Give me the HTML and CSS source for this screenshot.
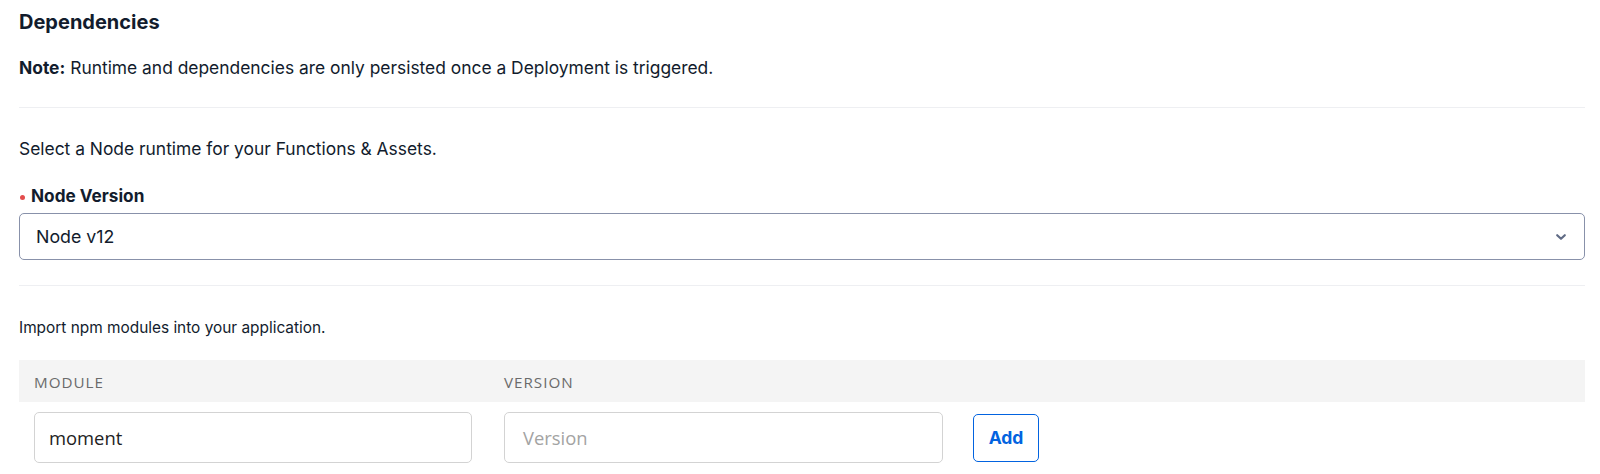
FILE: index.html
```html
<!DOCTYPE html>
<html lang="en">
<head>
<meta charset="utf-8">
<title>Dependencies</title>
<link rel="stylesheet" href="styles.css">
</head>
<body>
<div class="page">
  <h1 class="title">Dependencies</h1>
  <p class="note"><strong>Note:</strong> Runtime and dependencies are only persisted once a Deployment is triggered.</p>
  <hr class="divider">
  <p class="help help-runtime">Select a Node runtime for your Functions &amp; Assets.</p>
  <label class="label"><span class="required"></span>Node Version</label>
  <div class="select">
    <span class="select-value">Node v12</span>
    <svg class="chevron" width="14" height="14" viewBox="0 0 14 14" aria-hidden="true"><path d="M3.2 5.2 L7 8.8 L10.8 5.2" fill="none" stroke="#606b85" stroke-width="2.2" stroke-linecap="round" stroke-linejoin="round"/></svg>
  </div>
  <hr class="divider divider-2">
  <p class="help help-npm">Import npm modules into your application.</p>
  <div class="table">
    <div class="thead">
      <div class="col col-module">MODULE</div>
      <div class="col col-version">VERSION</div>
    </div>
    <div class="trow">
      <div class="input input-module">moment</div>
      <div class="input input-version placeholder">Version</div>
      <button class="btn-add">Add</button>
    </div>
  </div>
</div>
</body>
</html>
```

FILE: styles.css
```css
* { box-sizing: border-box; }
html, body { margin: 0; padding: 0; background: #ffffff; }
.page {
  padding: 8px 15px 0 19px;
  font-family: Inter, "Noto Sans", sans-serif;
  color: #121c2d;
  font-size: 17.4px;
}
.title {
  margin: 0;
  font-size: 20px;
  line-height: 28px;
  font-weight: 700;
}
.note {
  margin: 19px 0 0;
  line-height: 26px;
}
.note strong { font-weight: 700; }
.divider {
  margin: 26px 0 0;
  border: 0;
  height: 1px;
  background: #eeeff2;
}
.help { margin: 0; line-height: 26px; }
.help-runtime { margin-top: 28px; }
.label {
  display: flex;
  align-items: center;
  margin-top: 21px;
  line-height: 26px;
  font-weight: 700;
  font-size: 17.2px;
}
.required {
  width: 5px;
  height: 5px;
  border-radius: 50%;
  background: #e34d4d;
  margin: 2px 6px 0 1px;
}
.select {
  margin-top: 4px;
  height: 47px;
  border: 1px solid #8891aa;
  border-radius: 5px;
  display: flex;
  align-items: center;
  justify-content: space-between;
  padding: 0 16px 0 16px;
  line-height: 24px;
  font-size: 17.8px;
}
.chevron { display: block; margin-top: 1px; }
.divider-2 { margin-top: 25px; }
.help-npm { margin-top: 29px; font-size: 15.4px; }
.table {
  margin-top: 19px;
  font-family: "Open Sans", "Noto Sans", sans-serif;
}
.thead {
  display: flex;
  height: 42px;
  align-items: center;
  background: #f4f4f4;
  padding-left: 15px;
  color: #6b6b6b;
  font-size: 15.2px;
  letter-spacing: 1px;
}
.thead .col { padding-top: 2px; }
.col-module { width: 470px; }
.trow {
  display: flex;
  align-items: center;
  gap: 30px;
  padding: 10px 0 0 15px;
}
.input {
  height: 51px;
  border: 1px solid #d3d3d3;
  border-radius: 5px;
  display: flex;
  align-items: center;
  padding: 0 14px;
  font-size: 18.4px;
  color: #222222;
  width: 438px;
}
.input-version { width: 439px; margin-left: 2px; padding-left: 18px; }
.placeholder { color: #a3a3a3; }
.btn-add {
  width: 66px;
  height: 48px;
  border: 1.5px solid #0263e0;
  border-radius: 5px;
  background: #ffffff;
  color: #0263e0;
  font-family: Inter, "Noto Sans", sans-serif;
  font-weight: 700;
  font-size: 17.5px;
  padding: 0;
}
```
